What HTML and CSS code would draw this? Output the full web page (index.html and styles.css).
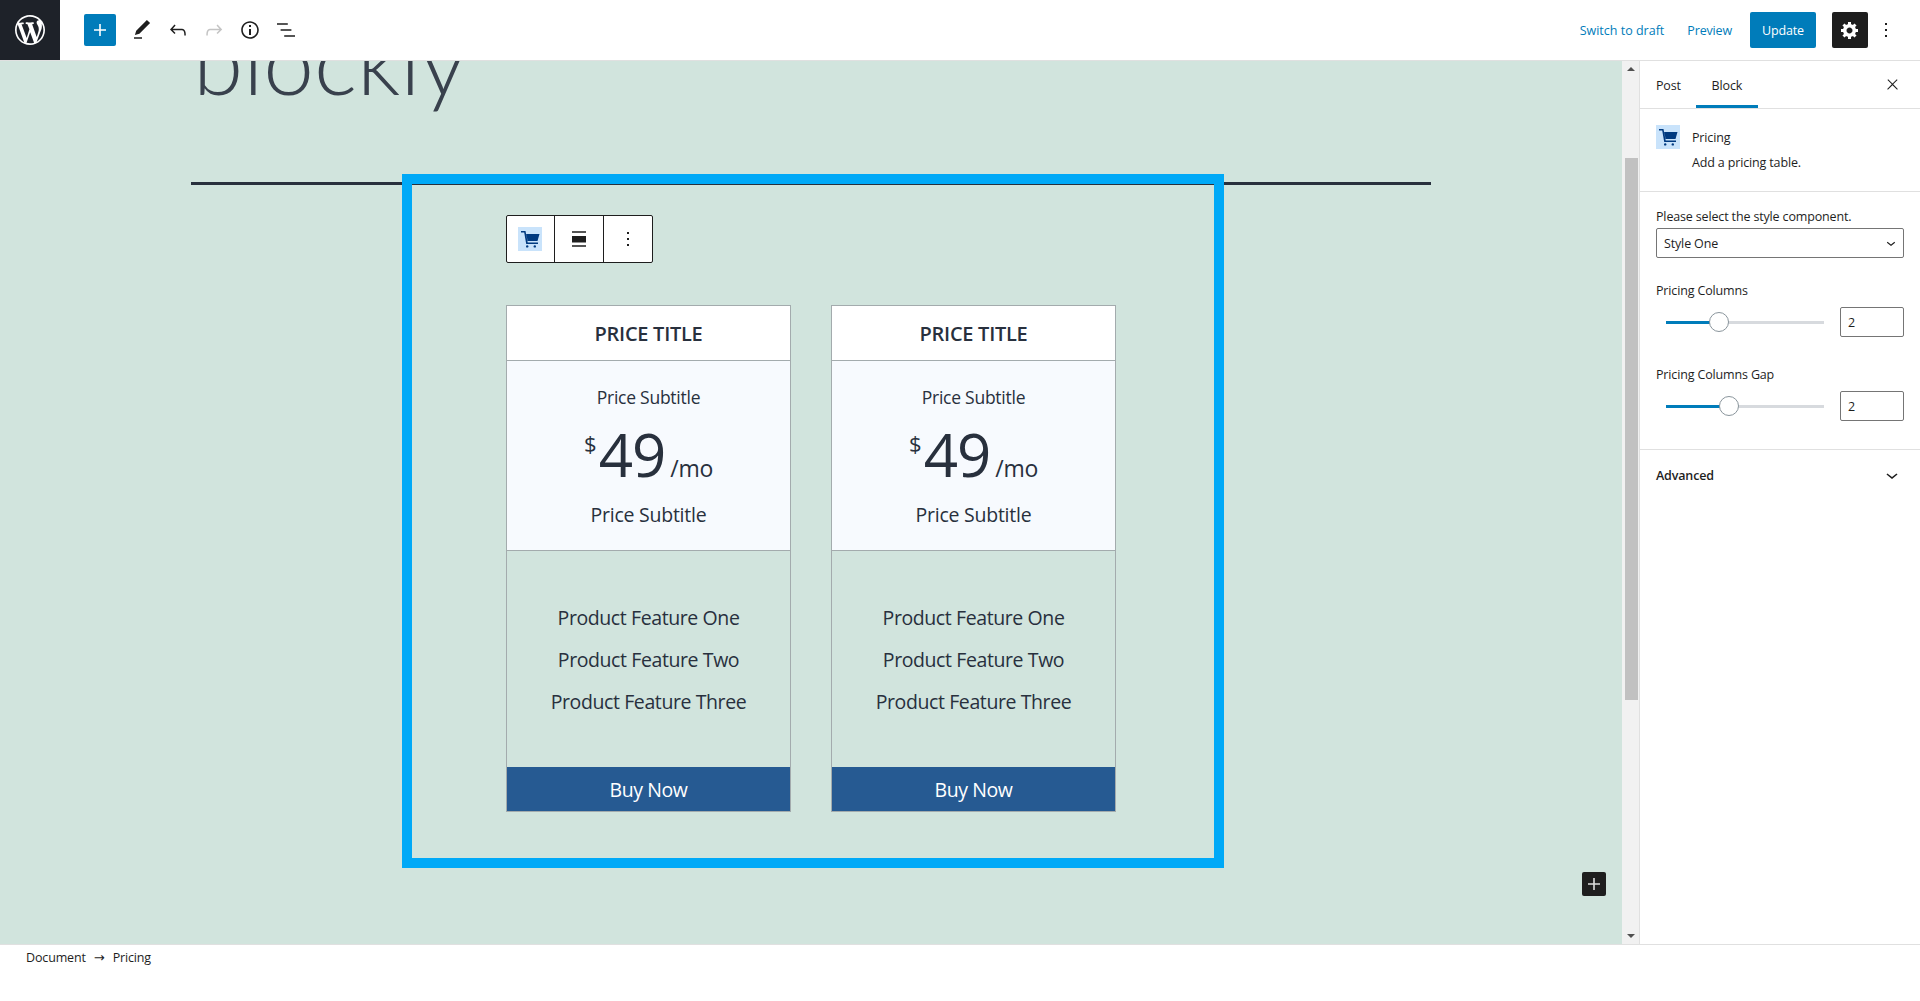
FILE: index.html
```html
<!DOCTYPE html>
<html lang="en">
<head>
  <meta charset="UTF-8" />
  <title>Edit Page</title>
  <link rel="stylesheet" href="styles.css">
</head>
<body>

<header class="topbar">
  <a class="wp-logo">
    <svg viewBox="0 0 20 20" width="30" height="30"><path fill="#fff" d="M20 10c0-5.51-4.49-10-10-10C4.48 0 0 4.49 0 10c0 5.52 4.48 10 10 10 5.51 0 10-4.48 10-10zM7.78 15.37L4.37 6.22c.55-.02 1.17-.08 1.17-.08.5-.06.44-1.13-.06-1.11 0 0-1.45.11-2.37.11-.18 0-.37 0-.58-.01C4.12 2.69 6.87 1.11 10 1.11c2.33 0 4.45.87 6.05 2.34-.68-.11-1.65.39-1.65 1.58 0 .74.45 1.36.9 2.1.35.61.55 1.36.55 2.46 0 1.49-1.4 5-1.4 5l-3.03-8.37c.54-.02.82-.17.82-.17.5-.05.44-1.25-.06-1.22 0 0-1.44.12-2.38.12-.87 0-2.33-.12-2.33-.12-.5-.03-.56 1.2-.06 1.22l.92.08 1.26 3.41zM17.41 10c.24-.64.74-1.87.43-4.25.7 1.29 1.05 2.71 1.05 4.25 0 3.29-1.73 6.24-4.4 7.78.97-2.59 1.94-5.2 2.92-7.78zM6.1 18.09C3.12 16.65 1.11 13.53 1.11 10c0-1.3.23-2.48.72-3.59C3.25 10.3 4.67 14.2 6.1 18.09zm4.03-6.63l2.58 6.98c-.86.29-1.76.45-2.71.45-.79 0-1.57-.11-2.29-.33.81-2.38 1.62-4.74 2.42-7.1z"/></svg>
  </a>
  <div class="tools">
    <button class="add-btn"><svg viewBox="0 0 24 24" width="24" height="24"><path fill="#fff" d="M18 11.2h-5.2V6h-1.6v5.2H6v1.6h5.2V18h1.6v-5.2H18z"/></svg></button>
    <button class="icon-btn"><svg viewBox="0 0 24 24" width="24" height="24"><path d="M20.1 5.1L16.9 2 6.2 12.7l-1.3 4.4 4.5-1.3L20.1 5.1zM4 20.8h8v-1.5H4v1.5z"/></svg></button>
    <button class="icon-btn"><svg viewBox="0 0 24 24" width="24" height="24"><path d="M18.3 11.7c-.6-.6-1.4-.9-2.3-.9H6.7l2.9-3.3-1.1-1-4.5 5L8.5 16l1-1-2.7-2.7H16c.5 0 .9.2 1.3.5 1 1 1 3.4 1 4.5v.3h1.5v-.2c0-1.5 0-4.3-1.5-5.7z"/></svg></button>
    <button class="icon-btn disabled"><svg viewBox="0 0 24 24" width="24" height="24"><path d="M15.6 6.5l-1.1 1 2.9 3.3H8c-.9 0-1.7.3-2.3.9-1.4 1.5-1.4 4.2-1.4 5.6v.2h1.5v-.3c0-1.1 0-3.5 1-4.5.3-.3.7-.5 1.3-.5h9.2L14.5 15l1.1 1.1 4.6-4.6-4.6-5z"/></svg></button>
    <button class="icon-btn"><svg viewBox="0 0 24 24" width="24" height="24"><path d="M12 3.2c-4.8 0-8.8 3.9-8.8 8.8 0 4.8 3.9 8.8 8.8 8.8 4.8 0 8.8-3.9 8.8-8.8 0-4.8-4-8.8-8.8-8.8zm0 16c-4 0-7.2-3.3-7.2-7.2C4.8 8 8 4.8 12 4.8s7.2 3.3 7.2 7.2c0 4-3.2 7.2-7.2 7.2zM11 17h2v-6h-2v6zm0-8h2V7h-2v2z"/></svg></button>
    <button class="icon-btn"><svg viewBox="0 0 24 24" width="24" height="24"><path d="M13.8 5.2H3v1.5h10.8V5.2zm-3.6 12v1.5H21v-1.5H10.2zm7.2-6H6.6v1.5h10.8v-1.5z"/></svg></button>
  </div>
  <div class="actions">
    <a class="link-btn draft">Switch to draft</a>
    <a class="link-btn preview">Preview</a>
    <button class="update-btn">Update</button>
    <button class="settings-btn"><svg viewBox="0 0 20 20" width="20" height="20"><path fill="#fff" d="M18 12h-2.18c-.17.7-.44 1.35-.81 1.93l1.54 1.54-2.1 2.1-1.54-1.54c-.58.36-1.23.63-1.91.79V19H8v-2.18c-.68-.16-1.33-.43-1.91-.79l-1.54 1.54-2.12-2.12 1.54-1.54c-.36-.58-.63-1.23-.79-1.91H1V9.03h2.17c.16-.7.44-1.35.8-1.94L2.43 5.55l2.1-2.1 1.54 1.54c.58-.37 1.24-.64 1.93-.81V2h3v2.18c.68.16 1.33.43 1.91.79l1.54-1.54 2.12 2.12-1.54 1.54c.36.59.64 1.24.8 1.94H18V12zm-8.5 1.5c1.66 0 3-1.34 3-3s-1.34-3-3-3-3 1.34-3 3 1.34 3 3 3z"/></svg></button>
    <button class="icon-btn more"><svg viewBox="0 0 24 24" width="24" height="24"><path d="M13 19h-2v-2h2v2zm0-6h-2v-2h2v2zm0-6h-2V5h2v2z"/></svg></button>
  </div>
</header>

<div class="workspace">
  <main class="canvas">
    <h1 class="post-title">blockly</h1>
    <hr class="separator">

    <section class="selected-block">
      <div class="block-toolbar">
        <div class="tb-cell">
          <span class="block-icon">
            <svg viewBox="0 0 24 24" width="24" height="24"><path fill="#003a80" d="M3 4h4.5l2.2 11.5H20V17H8.2L6.2 5.5H3zM8.2 7h13.3l-2 7H9.6z"/><circle fill="#003a80" cx="9.2" cy="19.4" r="1.2"/><circle fill="#003a80" cx="16.8" cy="19.4" r="1.2"/></svg>
          </span>
        </div>
        <div class="tb-cell">
          <svg viewBox="0 0 24 24" width="24" height="24"><path fill="#555" d="M5 4h14v2H5zM5 18h14v2H5z"/><path fill="#1e1e1e" d="M5 9h14v6.5H5z"/></svg>
        </div>
        <div class="tb-cell">
          <svg viewBox="0 0 24 24" width="24" height="24"><path fill="#1e1e1e" d="M13 19h-2v-2h2v2zm0-6h-2v-2h2v2zm0-6h-2V5h2v2z"/></svg>
        </div>
      </div>

      <div class="pricing-grid">
        <article class="price-card">
          <h2 class="price-title">PRICE TITLE</h2>
          <div class="price-body">
            <p class="sub-top">Price Subtitle</p>
            <p class="amount"><span class="currency">$</span><span class="figure">49</span><span class="period">/mo</span></p>
            <p class="sub-bottom">Price Subtitle</p>
          </div>
          <ul class="features">
            <li>Product Feature One</li>
            <li>Product Feature Two</li>
            <li>Product Feature Three</li>
          </ul>
          <a class="buy-btn">Buy Now</a>
        </article>

        <article class="price-card">
          <h2 class="price-title">PRICE TITLE</h2>
          <div class="price-body">
            <p class="sub-top">Price Subtitle</p>
            <p class="amount"><span class="currency">$</span><span class="figure">49</span><span class="period">/mo</span></p>
            <p class="sub-bottom">Price Subtitle</p>
          </div>
          <ul class="features">
            <li>Product Feature One</li>
            <li>Product Feature Two</li>
            <li>Product Feature Three</li>
          </ul>
          <a class="buy-btn">Buy Now</a>
        </article>
      </div>
    </section>

    <button class="inserter"><svg viewBox="0 0 24 24" width="24" height="24"><path fill="#ddd" d="M18 11.2h-5.2V6h-1.6v5.2H6v1.6h5.2V18h1.6v-5.2H18z"/></svg></button>
  </main>

  <div class="scrollbar">
    <span class="arrow-up"></span>
    <span class="scroll-thumb"></span>
    <span class="arrow-down"></span>
  </div>

  <aside class="sidebar">
    <div class="tabs">
      <span class="tab">Post</span>
      <span class="tab active">Block</span>
      <svg class="tab-close" viewBox="0 0 24 24" width="17" height="17"><path fill="#1e1e1e" d="M13 11.8l6.1-6.3-1-1-6.1 6.2-6.1-6.2-1 1 6.1 6.3-6.5 6.7 1 1 6.5-6.6 6.5 6.6 1-1z"/></svg>
    </div>

    <div class="panel block-card">
      <span class="block-icon">
        <svg viewBox="0 0 24 24" width="24" height="24"><path fill="#003a80" d="M3 4h4.5l2.2 11.5H20V17H8.2L6.2 5.5H3zM8.2 7h13.3l-2 7H9.6z"/><circle fill="#003a80" cx="9.2" cy="19.4" r="1.2"/><circle fill="#003a80" cx="16.8" cy="19.4" r="1.2"/></svg>
      </span>
      <div class="block-info">
        <div class="block-name">Pricing</div>
        <div class="block-desc">Add a pricing table.</div>
      </div>
    </div>

    <div class="panel settings">
      <label class="field-label">Please select the style component.</label>
      <div class="select-box">
        <span>Style One</span>
        <svg viewBox="0 0 24 24" width="18" height="18"><path fill="#1e1e1e" d="M17.5 11.6L12 16l-5.5-4.4.9-1.2L12 14l4.5-3.6 1 1.2z"/></svg>
      </div>

      <label class="field-label range-label">Pricing Columns</label>
      <div class="range-row">
        <div class="range-track">
          <span class="range-fill" style="width:53px"></span>
          <span class="range-thumb"></span>
        </div>
        <input class="num-input" type="text" value="2">
      </div>

      <label class="field-label range-label gap-label">Pricing Columns Gap</label>
      <div class="range-row">
        <div class="range-track">
          <span class="range-fill" style="width:63px"></span>
          <span class="range-thumb"></span>
        </div>
        <input class="num-input" type="text" value="2">
      </div>
    </div>

    <div class="panel advanced">
      <span>Advanced</span>
      <svg viewBox="0 0 24 24" width="24" height="24"><path fill="#1e1e1e" d="M17.5 11.6L12 16l-5.5-4.4.9-1.2L12 14l4.5-3.6 1 1.2z"/></svg>
    </div>
  </aside>
</div>

<footer class="breadcrumbs">
  <span>Document</span>
  <span class="crumb-arrow">→</span>
  <span>Pricing</span>
</footer>

</body>
</html>
```

FILE: styles.css
```css
* { box-sizing: border-box; }
html, body { height: 100%; }
body {
  margin: 0;
  height: 1001px;
  overflow: hidden;
  display: flex;
  flex-direction: column;
  background-color: #fff;
  color: #1e1e1e;
  font-family: 'Open Sans', 'Noto Sans', sans-serif;
  font-size: 12.5px;
  letter-spacing: -0.15px;
}
button {
  border: none;
  padding: 0;
  background: none;
  font-family: inherit;
  cursor: pointer;
}
svg { display: block; }

/* top bar */
.topbar {
  flex: none;
  height: 61px;
  display: flex;
  align-items: flex-start;
  border-bottom: 1px solid #e0e0e0;
}
.wp-logo {
  width: 60px;
  height: 60px;
  background-color: #1e2229;
  display: flex;
  align-items: center;
  justify-content: center;
}
.tools {
  display: flex;
  align-items: center;
  height: 60px;
  margin-left: 24px;
}
.add-btn {
  width: 32px;
  height: 32px;
  border-radius: 2px;
  background-color: #007cba;
  display: flex;
  align-items: center;
  justify-content: center;
  margin-right: 8px;
}
.icon-btn {
  width: 36px;
  height: 36px;
  display: flex;
  align-items: center;
  justify-content: center;
}
.icon-btn svg { fill: #1e1e1e; }
.icon-btn.disabled svg { fill: #c4c4c4; }
.actions {
  margin-left: auto;
  display: flex;
  align-items: center;
  height: 60px;
}
.link-btn {
  color: #007cba;
  font-size: 12.5px;
  padding-top: 1px;
}
.draft { margin-right: 23px; letter-spacing: 0; }
.preview { margin-right: 18px; }
.update-btn {
  width: 66px;
  height: 36px;
  padding-top: 1px;
  border-radius: 2px;
  background-color: #007cba;
  color: #fff;
  font-size: 12.5px;
  letter-spacing: -0.15px;
  margin-right: 16px;
}
.settings-btn {
  width: 36px;
  height: 36px;
  border-radius: 2px;
  background-color: #1e1e1e;
  display: flex;
  align-items: center;
  justify-content: center;
}
.more { margin: 0 16px 0 0; }

/* main area */
.workspace {
  flex: none;
  height: 884px;
  display: flex;
  border-bottom: 1px solid #e0e0e0;
}
.canvas {
  position: relative;
  width: 1622px;
  flex: none;
  overflow: hidden;
  background-color: #d1e4dd;
  color: #28303d;
}
.post-title {
  margin: -56px 0 0 193px;
  font-family: 'Lato', sans-serif;
  font-weight: 300;
  font-size: 91px;
  line-height: 110px;
  letter-spacing: 0;
  color: #39414d;
}
.separator {
  margin: 67px 191px 0;
  height: 3px;
  border: none;
  background-color: #28303d;
}
.selected-block {
  position: relative;
  width: 822px;
  height: 694px;
  margin: -11px 0 0 402px;
  padding: 31px 94px 0;
  border: 10px solid #00a9f7;
}
.block-toolbar {
  width: 147px;
  height: 48px;
  display: flex;
  background-color: #fff;
  border: 1px solid #1e1e1e;
  border-radius: 2px;
}
.tb-cell {
  width: 49px;
  flex: none;
  display: flex;
  align-items: center;
  justify-content: center;
  border-left: 1px solid #1e1e1e;
}
.tb-cell:first-child {
  width: 47px;
  padding-left: 11px;
  justify-content: flex-start;
  border-left: none;
}
.block-icon {
  width: 24px;
  height: 24px;
  background-color: #c9e3fb;
  display: block;
  flex: none;
}
.pricing-grid {
  display: flex;
  gap: 40px;
  margin-top: 42px;
}
.price-card {
  width: 285px;
  height: 507px;
  display: flex;
  flex-direction: column;
  border: 1px solid #a3abad;
  text-align: center;
}
.price-title {
  height: 55px;
  margin: 0;
  background-color: #fff;
  border-bottom: 1px solid #a3abad;
  font-size: 20px;
  font-weight: 600;
  line-height: 56px;
  letter-spacing: -0.27px;
}
.price-body {
  height: 190px;
  background-color: #f7fafe;
  border-bottom: 1px solid #a3abad;
  padding-top: 24px;
}
.price-body p { margin: 0; }
.sub-top {
  font-size: 17.5px;
  line-height: 24px;
  letter-spacing: -0.25px;
}
.amount {
  display: flex;
  justify-content: center;
  align-items: baseline;
  height: 72px;
  margin-top: 9px !important;
  line-height: 72px;
}
.currency {
  font-size: 22px;
  letter-spacing: 0;
  align-self: flex-start;
  line-height: 50px;
  margin-right: 2px;
}
.figure {
  font-size: 60px;
  letter-spacing: -1px;
}
.period {
  font-size: 23px;
  letter-spacing: -0.3px;
  margin-left: 5px;
}
.sub-bottom {
  font-size: 19.5px;
  line-height: 28px;
  letter-spacing: -0.25px;
  margin-top: 11px !important;
}
.features {
  flex: 1;
  list-style: none;
  margin: 0;
  padding: 50px 0 0;
  font-size: 19.5px;
  letter-spacing: -0.4px;
}
.features li {
  height: 34px;
  line-height: 34px;
  margin-bottom: 8px;
}
.buy-btn {
  height: 44px;
  background-color: #265a92;
  color: #fff;
  font-size: 19.5px;
  line-height: 45px;
  letter-spacing: -0.4px;
}
.inserter {
  position: absolute;
  left: 1582px;
  top: 811px;
  width: 24px;
  height: 24px;
  border-radius: 2px;
  background-color: #1e1e1e;
}

/* scrollbar of the canvas */
.scrollbar {
  flex: none;
  width: 18px;
  display: flex;
  flex-direction: column;
  align-items: center;
  background-color: #f1f1f1;
  border-right: 1px solid #e0e0e0;
}
.arrow-up {
  margin-top: 6px;
  border: 4px solid transparent;
  border-top: none;
  border-bottom: 4px solid #505050;
}
.scroll-thumb {
  width: 13px;
  height: 542px;
  margin-top: 87px;
  margin-right: -1px;
  background-color: #c1c1c1;
}
.arrow-down {
  margin-top: auto;
  margin-bottom: 6px;
  border: 4px solid transparent;
  border-bottom: none;
  border-top: 4px solid #505050;
}

/* sidebar */
.sidebar {
  flex: 1;
  min-width: 0;
  background-color: #fff;
}
.tabs {
  height: 48px;
  display: flex;
  align-items: stretch;
  padding-left: 16px;
  border-bottom: 1px solid #e0e0e0;
  font-size: 12.5px;
}
.tab {
  line-height: 50px;
  position: relative;
}
.tab.active {
  width: 62px;
  margin-left: 15px;
  text-align: center;
  box-shadow: inset 0 -3px 0 #007cba;
}
.tab-close {
  margin: 15px 19px 0 auto;
}
.panel {
  border-bottom: 1px solid #e0e0e0;
  padding: 0 16px;
}
.block-card {
  height: 83px;
  display: flex;
  gap: 12px;
  padding-top: 16px;
}
.block-name {
  font-size: 12.5px;
  font-weight: 500;
  line-height: 24px;
  padding-top: 1px;
}
.block-desc {
  font-size: 12.5px;
  line-height: 24px;
  margin-top: 1px;
}
.settings { height: 258px; padding-top: 15px; }
.field-label {
  display: block;
  font-size: 12.5px;
  line-height: 20px;
}
.select-box {
  height: 30px;
  margin-top: 1px;
  display: flex;
  align-items: center;
  justify-content: space-between;
  padding: 0 3px 0 7px;
  border: 1px solid #757575;
  border-radius: 2px;
  font-size: 12.5px;
}
.range-label { margin-top: 23px; }
.gap-label { margin-top: 28px; }
.range-row {
  display: flex;
  align-items: center;
  margin-top: 6px;
  padding-left: 10px;
}
.range-track {
  width: 158px;
  height: 3px;
  display: flex;
  align-items: center;
  background-color: #d7dade;
}
.range-fill {
  height: 3px;
  background-color: #007cba;
}
.range-thumb {
  width: 20px;
  height: 20px;
  margin-left: -10px;
  border-radius: 50%;
  background-color: #fff;
  border: 1px solid #8a959c;
}
.num-input {
  width: 64px;
  height: 30px;
  margin-left: 16px;
  padding: 0 7px;
  border: 1px solid #757575;
  border-radius: 2px;
  font-family: inherit;
  font-size: 12.5px;
  color: #1e1e1e;
}
.advanced {
  border-bottom: none;
  height: 50px;
  display: flex;
  align-items: center;
  justify-content: space-between;
  font-weight: 600;
}

/* breadcrumbs */
.breadcrumbs {
  flex: 1;
  padding: 3px 0 0 26px;
  display: flex;
  gap: 8px;
  font-size: 12.5px;
  line-height: 20px;
}
.crumb-arrow {
  font-family: 'DejaVu Sans', sans-serif;
  font-size: 13px;
  letter-spacing: 0;
}
```
